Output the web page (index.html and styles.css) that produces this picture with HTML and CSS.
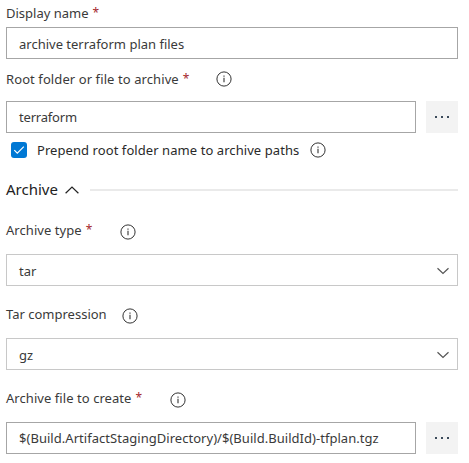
FILE: index.html
```
<!DOCTYPE html>
<html lang="en">
<head>
<meta charset="utf-8">
<title>Archive files</title>
<link rel="stylesheet" href="styles.css">
</head>
<body>
<svg class="defs" width="0" height="0">
  <symbol id="info" viewBox="0 0 16 16"><circle cx="8" cy="8" r="7.100" fill="none" stroke="currentColor" stroke-width="1"/><path d="M8 6.800v4.400M8 4.500v1.200" fill="none" stroke="currentColor" stroke-width="1.100"/></symbol>
  <symbol id="down" viewBox="0 0 12 8"><path d="M.5 1.200 6 6.400l5.500-5.200" fill="none" stroke="currentColor" stroke-width="1.200"/></symbol>
  <symbol id="dots" viewBox="0 0 16 4"><path d="M1 1h2v2H1zM7 1h2v2H7zM13 1h2v2h-2z" fill="currentColor"/></symbol>
</svg>
<form class="form">
  <div class="label first"><span>Display name</span><b>*</b></div>
  <div class="box"><span>archive terraform plan files</span></div>

  <div class="label root"><span class="t-root">Root folder or file to archive</span><b>*</b><svg class="info"><use href="#info"/></svg></div>
  <div class="row"><div class="box"><span class="t-terraform">terraform</span></div><div class="more"><svg><use href="#dots"/></svg></div></div>

  <div class="check"><span class="tick"><svg viewBox="0 0 16 16"><path d="m3.300 8.200 3 3 6.500-6.500" fill="none" stroke="#fff" stroke-width="1.200"/></svg></span><span class="t-prepend">Prepend root folder name to archive paths</span><svg class="info"><use href="#info"/></svg></div>

  <div class="section"><span>Archive</span><svg class="up" viewBox="0 0 14 8"><path d="M.6 7.300 7 1l6.400 6.300" fill="none" stroke="currentColor" stroke-width="1.200"/></svg><i></i></div>

  <div class="label type"><span class="t-type">Archive type</span><b>*</b><svg class="info low"><use href="#info"/></svg></div>
  <div class="box select"><span>tar</span><svg><use href="#down"/></svg></div>

  <div class="label tar"><span>Tar compression</span><svg class="info low"><use href="#info"/></svg></div>
  <div class="box select"><span>gz</span><svg><use href="#down"/></svg></div>

  <div class="label create"><span class="t-create">Archive file to create</span><b>*</b><svg class="info low"><use href="#info"/></svg></div>
  <div class="row"><div class="box"><span class="t-path">$(Build.ArtifactStagingDirectory)/$(Build.BuildId)-tfplan.tgz</span></div><div class="more"><svg><use href="#dots"/></svg></div></div>
</form>
</body>
</html>
```
FILE: styles.css
```
* { box-sizing: border-box; }
body { margin: 0; background: #fff; color: #3a3a3a; font: 13px/20px "Noto Sans", "Open Sans", sans-serif; white-space: nowrap; }
.defs { display: block; }
.form { width: 452px; margin-left: 6px; }
.label { display: flex; align-items: center; height: 40px; margin-bottom: 2px; }
.label.first { height: 26px; margin-bottom: 1px; }
.label b { margin-left: 4px; color: #a4262c; font-size: 12px; font-weight: 400; width: 6px; }
.info { width: 16px; height: 16px; flex: none; color: #333; }
.info.low { position: relative; top: 2px; }
.root .info { margin-left: 27px; }
.type .info { margin-left: 28px; }
.tar .info { margin-left: 15px; }
.create .info { margin-left: 28px; }
.box { display: flex; align-items: center; flex: 1; height: 32px; padding: 1px 8px 0 12px; border: 1px solid #a6a6a6; }
.row .box { padding-top: 0; }
.row { display: flex; gap: 10px; }
.more { display: flex; align-items: center; justify-content: center; width: 32px; height: 32px; background: #f3f3f3; color: #3b4a5a; }
.more svg { width: 16px; height: 4px; }
.select { justify-content: space-between; border-color: #c8c8c8; }
.select svg { width: 12px; height: 8px; color: #555; }
.check { display: flex; align-items: center; height: 34px; padding-left: 5px; color: #2a2a2a; }
.tick { width: 16px; height: 16px; margin-right: 10px; border-radius: 3px; background: #0078d4; }
.tick svg { display: block; }
.check .info { margin-left: 11px; }
.section { display: flex; align-items: center; height: 45px; font-size: 15px; color: #222; }
.section > span { position: relative; top: -1px; }
.section .up { width: 14px; height: 8px; margin: 0 11px 0 7px; }
.section i { flex: 1; height: 2px; background: #eaeaea; }
.type { height: 36px; margin-bottom: 6px; }
.tar, .create { margin-top: 8px; margin-bottom: 4px; }
.t-root { letter-spacing: .09px; }
.t-terraform { letter-spacing: -.2px; }
.t-prepend { letter-spacing: .07px; }
.t-type { letter-spacing: .06px; }
.t-create { letter-spacing: .06px; }
.t-path { letter-spacing: .035px; }
```
